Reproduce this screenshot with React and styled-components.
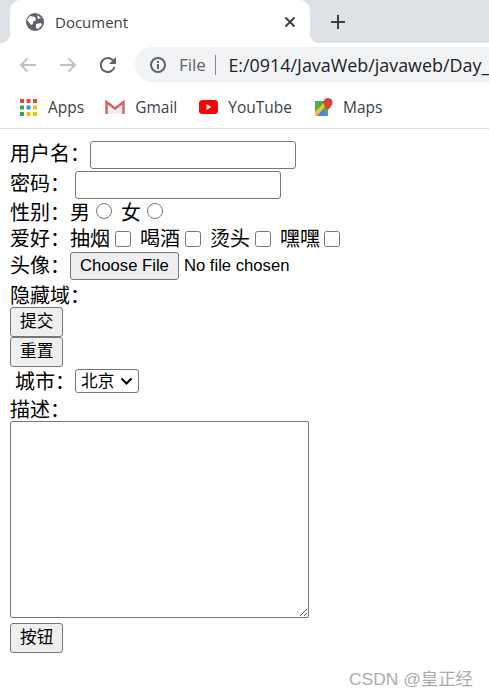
import styled, { createGlobalStyle } from 'styled-components';

const GlobalStyle = createGlobalStyle`
    html, body {
        margin: 0;
        background: #ffffff;
    }
    body {
        font-family: "Liberation Sans", "Noto Sans CJK SC", sans-serif;
        overflow: hidden;
    }
`;

const chevron = encodeURIComponent(
    '<svg xmlns="http://www.w3.org/2000/svg" width="13" height="9" viewBox="0 0 13 9"><path d="M1.5 1.5L6.5 6.5l5-5" stroke="#000" stroke-width="2.2" fill="none"/></svg>'
);

const Page = styled.div`
    position: relative;
    width: 489px;
    height: 697px;
    overflow: hidden;
`;

const TabStrip = styled.div`
    display: flex;
    align-items: flex-end;
    height: 43px;
    padding-left: 10px;
    background: #dee1e6;
`;

const Tab = styled.div`
    position: relative;
    display: flex;
    align-items: center;
    width: 300px;
    height: 43px;
    padding: 0 14px 0 16px;
    box-sizing: border-box;
    background: #ffffff;
    border-radius: 10px 10px 0 0;
    color: #3c4043;
    font: 15px "Open Sans", sans-serif;

    &::before, &::after {
        content: '';
        position: absolute;
        bottom: 0;
        width: 10px;
        height: 10px;
    }
    &::before {
        left: -10px;
        background: radial-gradient(circle at 0 0, #dee1e6 10px, #ffffff 10.5px);
    }
    &::after {
        right: -10px;
        background: radial-gradient(circle at 100% 0, #dee1e6 10px, #ffffff 10.5px);
    }
`;

const TabTitle = styled.span`
    flex: 1;
    margin-left: 11px;
`;

const NewTab = styled.div`
    display: flex;
    margin-left: 20px;
    align-self: center;
`;

const Toolbar = styled.div`
    display: flex;
    align-items: center;
    height: 43px;
    padding: 5px 0 5px 18px;
    box-sizing: border-box;
    gap: 21px;
`;

const NavIcon = styled.div`
    display: flex;
    width: 19px;
    justify-content: center;
`;

const Omnibox = styled.div`
    display: flex;
    align-items: center;
    flex: 1;
    height: 35px;
    min-width: 0;
    margin-left: -3px;
    padding-left: 15px;
    background: #f1f3f4;
    border-radius: 18px 0 0 18px;
    font-family: "Open Sans", sans-serif;
    font-size: 17px;
    white-space: nowrap;
    overflow: hidden;

    & > * {
        flex-shrink: 0;
    }
`;

const Scheme = styled.span`
    margin-left: 13px;
    color: #5f6368;
`;

const Divider = styled.span`
    width: 1.5px;
    height: 20px;
    margin: 0 12px 0 9px;
    background: #80868b;
`;

const Url = styled.span`
    color: #202124;
    font-size: 17.9px;
`;

const Bookmarks = styled.div`
    display: flex;
    align-items: center;
    height: 43px;
    padding-left: 20px;
    box-sizing: border-box;
    border-bottom: 1px solid #dadce0;
    color: #3c4043;
    font-family: "Open Sans", sans-serif;
    font-size: 15.5px;
`;

const Bookmark = styled.div`
    display: flex;
    align-items: center;
    gap: 10px;
    margin-right: ${p => p.$gap}px;
`;

const Form = styled.form`
    padding: 11px 10px 0;
    color: #000000;
    font-size: 20px;
`;

const Row = styled.div`
    display: flex;
    align-items: center;
    height: ${p => p.$h}px;
    padding-left: ${p => p.$indent || 0}px;
`;

const Label = styled.span`
    padding-bottom: ${p => p.$lift || 0}px;
    padding-top: ${p => p.$sink || 0}px;
    line-height: 1;
    white-space: pre;
`;

const TextField = styled.input`
    width: 206px;
    height: 28px;
    margin-left: ${p => p.$left}px;
    padding: 0;
    box-sizing: border-box;
    background: #ffffff;
    border: 1px solid #767676;
    border-radius: 3px;
`;

const Radio = styled.input.attrs({ type: 'radio' })`
    width: 16px;
    height: 16px;
    margin: 0 9px 4px 6px;
`;

const Check = styled.input.attrs({ type: 'checkbox' })`
    width: 16px;
    height: 16px;
    margin: 0 9px 0 ${p => p.$left || 5}px;
`;

const FakeButton = styled.button`
    height: ${p => p.$h || 30}px;
    padding: 0 9px;
    background: #efefef;
    border: 1px solid #767676;
    border-radius: 3px;
    color: #000000;
    font-family: inherit;
    font-size: 16.67px;
    line-height: 1;
`;

const FileName = styled.span`
    margin-left: 5px;
    font-size: 16.67px;
`;

const CitySelect = styled.select`
    width: 64px;
    height: 24px;
    padding: 0 0 0 5px;
    appearance: none;
    background: #ffffff url("data:image/svg+xml,${chevron}") no-repeat right 5px center;
    border: 1px solid #767676;
    border-radius: 3px;
    color: #000000;
    font-family: inherit;
    font-size: 16.67px;
`;

const Description = styled.textarea`
    display: block;
    width: 299px;
    height: 197px;
    padding: 0;
    box-sizing: border-box;
    border: 1px solid #767676;
    border-radius: 2px;
`;

const ButtonRow = styled.div`
    margin-top: 5px;
`;

const Watermark = styled.div`
    position: absolute;
    right: 16px;
    top: 665px;
    color: #ababab;
    font-size: 17.4px;
`;

const GlobeIcon = () => (
    <svg width="18" height="18" viewBox="0 0 18 18">
        <circle cx="9" cy="9" r="9" fill="#5f6368" />
        <path d="M4 3l5 1 1 3-3 2v2l-2 1-4-5zM11 2l4 3-3 1zM10 11l5-1 1 2-4 4-2-1z" fill="#ffffff" />
    </svg>
);

const CloseIcon = () => (
    <svg width="12" height="12" viewBox="0 0 12 12">
        <path d="M1.5 1.5l9 9M10.5 1.5l-9 9" stroke="#3c4043" strokeWidth="2" />
    </svg>
);

const PlusIcon = () => (
    <svg width="16" height="16" viewBox="0 0 16 16">
        <path d="M8 1v14M1 8h14" stroke="#3c4043" strokeWidth="2" />
    </svg>
);

const ArrowIcon = ({ flip }) => (
    <svg width="18" height="16" viewBox="0 0 18 16" style={flip ? { transform: 'scaleX(-1)' } : undefined}>
        <path d="M17 8H2M8.5 1.5L2 8l6.5 6.5" stroke="#bdc1c6" strokeWidth="2" fill="none" />
    </svg>
);

const ReloadIcon = () => (
    <svg width="18" height="18" viewBox="0 0 18 18">
        <path d="M15.5 11a7 7 0 1 1-1.2-6.3" stroke="#5f6368" strokeWidth="2" fill="none" />
        <path d="M17 1v7h-7z" fill="#5f6368" />
    </svg>
);

const InfoIcon = () => (
    <svg width="16" height="16" viewBox="0 0 16 16">
        <circle cx="8" cy="8" r="7" stroke="#5f6368" strokeWidth="2" fill="none" />
        <path d="M8 7v5M8 4v2" stroke="#5f6368" strokeWidth="2" />
    </svg>
);

const AppsIcon = () => {
    const colors = ['#ea4335', '#ea4335', '#ea4335', '#34a853', '#4285f4', '#fbbc04', '#34a853', '#fbbc04', '#fbbc04'];
    return (
        <svg width="18" height="17" viewBox="0 0 18 17">
            {colors.map((c, i) => (
                <rect key={i} x={(i % 3) * 6.5} y={Math.floor(i / 3) * 6.5} width="4" height="4" fill={c} />
            ))}
        </svg>
    );
};

const GmailIcon = () => (
    <svg width="20" height="15" viewBox="0 0 20 15">
        <path d="M1.5 14V2L10 8.5 18.5 2v12z" fill="#ececec" />
        <path d="M1.5 14V2L10 8.5 18.5 2v12" stroke="#d9605a" strokeWidth="2.4" fill="none" />
    </svg>
);

const YouTubeIcon = () => (
    <svg width="19" height="14" viewBox="0 0 19 14">
        <rect width="19" height="14" rx="3.5" fill="#ff0000" />
        <path d="M7.5 4l5 3-5 3z" fill="#ffffff" />
    </svg>
);

const MapsIcon = () => (
    <svg width="19" height="19" viewBox="0 0 19 19">
        <path d="M1 3h13v15H1z" fill="#4caf50" />
        <path d="M1 18l7-8 6 8z" fill="#4285f4" />
        <path d="M1 14L12 3h2v2L3 18H1z" fill="#fbc02d" />
        <path d="M14 0a4.5 4.5 0 0 1 4.5 4.5C18.5 8 14 12 14 12S9.5 8 9.5 4.5A4.5 4.5 0 0 1 14 0z" fill="#db4437" />
    </svg>
);

export default function App() {
    return (
        <Page>
            <GlobalStyle />
            <TabStrip>
                <Tab>
                    <GlobeIcon />
                    <TabTitle>Document</TabTitle>
                    <CloseIcon />
                </Tab>
                <NewTab><PlusIcon /></NewTab>
            </TabStrip>
            <Toolbar>
                <NavIcon><ArrowIcon /></NavIcon>
                <NavIcon><ArrowIcon flip /></NavIcon>
                <NavIcon><ReloadIcon /></NavIcon>
                <Omnibox>
                    <InfoIcon />
                    <Scheme>File</Scheme>
                    <Divider />
                    <Url>E:/0914/JavaWeb/javaweb/Day_</Url>
                </Omnibox>
            </Toolbar>
            <Bookmarks>
                <Bookmark $gap={21}><AppsIcon />Apps</Bookmark>
                <Bookmark $gap={22}><GmailIcon />Gmail</Bookmark>
                <Bookmark $gap={22}><YouTubeIcon />YouTube</Bookmark>
                <Bookmark $gap={0}><MapsIcon />Maps</Bookmark>
            </Bookmarks>
            <Form>
                <Row $h={30}>
                    <Label $lift={3}>用户名：</Label>
                    <TextField type="text" $left={0} />
                </Row>
                <Row $h={30}>
                    <Label $lift={3}>密码：</Label>
                    <TextField type="password" $left={5} />
                </Row>
                <Row $h={26}>
                    <Label>性别：男</Label><Radio name="sex" />
                    <Label>女</Label><Radio name="sex" />
                </Row>
                <Row $h={26}>
                    <Label>爱好：抽烟</Label><Check />
                    <Label>喝酒</Label><Check />
                    <Label>烫头</Label><Check />
                    <Label>嘿嘿</Label><Check $left={4} />
                </Row>
                <Row $h={28}>
                    <Label>头像：</Label>
                    <FakeButton type="button" $h={28}>Choose File</FakeButton>
                    <FileName>No file chosen</FileName>
                </Row>
                <Row $h={27}><Label $sink={4}>隐藏域：</Label></Row>
                <Row $h={30}><FakeButton type="button">提交</FakeButton></Row>
                <Row $h={30}><FakeButton type="button">重置</FakeButton></Row>
                <Row $h={28} $indent={5}>
                    <Label $sink={2}>城市：</Label>
                    <CitySelect defaultValue="bj">
                        <option value="bj">北京</option>
                    </CitySelect>
                </Row>
                <Row $h={26}><Label $sink={4}>描述：</Label></Row>
                <Description />
                <ButtonRow><FakeButton type="button">按钮</FakeButton></ButtonRow>
            </Form>
            <Watermark>CSDN @皇正经</Watermark>
        </Page>
    );
}
